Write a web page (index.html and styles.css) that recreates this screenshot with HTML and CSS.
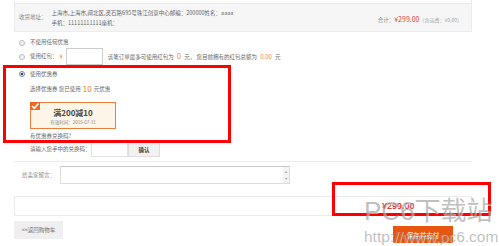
FILE: index.html
```html
<!DOCTYPE html>
<html lang="zh-CN">
<head>
    <meta charset="UTF-8">
    <meta name="viewport" content="width=device-width, initial-scale=1.0">
    <title>确认订单</title>
    <link rel="stylesheet" href="styles.css">
</head>
<body>
    <div class="page">
        <!-- 收货信息 -->
        <div class="order-box">
            <div class="order-top"></div>
            <div class="address-bar">
                <span class="address-label">收货地址：</span>
                <div class="address-text">
                    <p>上海市,上海市,闸北区,灵石路695号珠江创意中心邮编：200000姓名：aaaa</p>
                    <p>手机：11111111111座机：</p>
                </div>
                <div class="total">合计：<span class="price">¥299.00</span><span class="freight">（含运费：¥0.00）</span></div>
            </div>
        </div>

        <!-- 优惠选项 -->
        <div class="discounts">
            <div class="option option-none"><span class="radio"></span>不使用任何优惠</div>
            <div class="option option-bonus">
                <span class="radio"></span>使用红包：<span class="yen">¥</span><input class="bonus-input" type="text">
                <span class="hint">该笔订单最多可使用红包为 <em class="num">0</em> 元， 您目前拥有的红包总额为 <em class="num small">0.00</em> 元</span>
            </div>
            <div class="option option-coupon"><span class="radio checked"></span>使用优惠券</div>
            <div class="coupon-info">选择优惠券 您已使用 <em class="num big">10</em> 元优惠</div>
            <div class="coupon-card">
                <span class="coupon-check">
                    <svg width="10" height="8" viewBox="0 0 10 8"><polyline points="2,4 4.3,6.3 8.5,1.5" fill="none" stroke="#fff" stroke-width="1.6"/></svg>
                </span>
                <div class="coupon-title">满200减10</div>
                <div class="coupon-date">有效时间：2015-07-31</div>
            </div>
            <div class="redeem-ask">有优惠券兑换码?</div>
            <div class="redeem-row">
                <span class="redeem-label">请输入您手中的兑换码：</span><input class="redeem-input" type="text"><button class="btn-confirm">确认</button>
            </div>
        </div>

        <!-- 留言 -->
        <div class="message-row">
            <span class="message-label">给卖家留言：</span>
            <div class="message-box"><span class="scroll-arrows">▴<br>▾</span></div>
        </div>

        <div class="pay-bar"><span class="pay-price">¥299.00</span></div>

        <div class="actions">
            <button class="btn-back">&lt;&lt;返回购物车</button>
            <button class="btn-pay">保存并支付</button>
        </div>
    </div>

    <!-- 截图标注 -->
    <div class="mark mark-coupon"></div>
    <div class="mark mark-price"></div>

    <div class="watermark">
        <div class="wm-title">PC6下载站</div>
        <div class="wm-url">http://www.pc6.com</div>
    </div>
</body>
</html>
```

FILE: styles.css
```css
* {
    margin: 0;
    padding: 0;
    box-sizing: border-box;
}

body {
    width: 499px;
    height: 246px;
    overflow: hidden;
    position: relative;
    background: #fff;
    color: #666;
    font-family: "Noto Sans CJK SC", "Liberation Sans", sans-serif;
    font-size: 5.5px;
    line-height: 1.2;
}

em {
    font-style: normal;
}

.page {
    width: 472px;
}

/* Order Box */
.order-box {
    margin-left: 14px;
    width: 458px;
    border: 1px solid #ececec;
    border-top: none;
}

.order-top {
    height: 4px;
    border-bottom: 1px solid #ececec;
}

.address-bar {
    height: 27px;
    background: #f6f6f6;
    display: flex;
    align-items: center;
    padding: 0 9px 0 4px;
}

.address-label {
    color: #888;
    margin-right: 5px;
}

.address-text {
    flex: 1;
    line-height: 10px;
    white-space: nowrap;
}

.total {
    align-self: flex-end;
    margin-bottom: 7px;
    color: #888;
    white-space: nowrap;
}

.total .price {
    color: #e4393c;
    font-size: 7px;
}

.total .freight {
    color: #aaa;
    font-size: 5px;
}

/* Discount Options */
.discounts {
    padding-top: 5px;
}

.option {
    display: flex;
    align-items: center;
    padding-left: 19px;
}

.option-none {
    height: 11px;
}

.option-bonus {
    height: 17px;
}

.option-coupon {
    height: 12px;
    margin-top: 3px;
}

.radio {
    width: 6px;
    height: 6px;
    border: 1px solid #bbb;
    border-radius: 50%;
    background: #f4f4f4;
    margin-right: 5px;
}

.radio.checked {
    border-color: #7a8a9c;
    background: radial-gradient(circle, #2a3f5c 45%, #e6eaef 55%);
}

.yen {
    color: #f08030;
    font-size: 6px;
    margin-left: 2px;
}

.bonus-input {
    width: 37px;
    height: 17px;
    border: 1px solid #ccc;
    margin-left: 3px;
    outline: none;
}

.hint {
    margin-left: 5px;
}

.num {
    color: #f07b2b;
    font-size: 7px;
    margin: 0 2px;
}

.num.small {
    font-size: 6px;
}

.num.big {
    font-size: 8px;
}

.coupon-info {
    height: 12px;
    margin-top: 3px;
    padding-left: 30px;
    display: flex;
    align-items: center;
}

/* Coupon Card */
.coupon-card {
    position: relative;
    margin: 7px 0 0 30px;
    width: 86px;
    height: 27px;
    border: 1px solid #ec7d3b;
    background: #fdf5e8;
    text-align: center;
    padding-top: 5px;
}

.coupon-check {
    position: absolute;
    left: -1px;
    top: -1px;
    width: 10px;
    height: 8px;
    background: #ee6a22;
    display: flex;
}

.coupon-title {
    font-size: 8px;
    font-weight: bold;
    color: #444;
    line-height: 10px;
}

.coupon-date {
    font-size: 4.5px;
    color: #888;
    line-height: 8px;
}

.redeem-ask {
    height: 12px;
    margin-top: 1px;
    padding-left: 30px;
    display: flex;
    align-items: center;
}

.redeem-row {
    height: 15px;
    padding-left: 30px;
    display: flex;
    align-items: center;
}

.redeem-label {
    width: 61px;
}

.redeem-input {
    width: 37px;
    height: 15px;
    border: 1px solid #e2e2e2;
    outline: none;
}

.btn-confirm {
    width: 32px;
    height: 15px;
    border: 1px solid #ddd;
    background: #f2f2f2;
    font-family: inherit;
    font-size: 5.5px;
    font-weight: bold;
    color: #444;
}

/* Message */
.message-row {
    margin: 4px 0 0 14px;
    padding-top: 4px;
    border-top: 1px solid #ececec;
    display: flex;
    align-items: center;
    height: 23px;
}

.message-label {
    color: #888;
    width: 46px;
    padding-left: 8px;
}

.message-box {
    position: relative;
    width: 230px;
    height: 18px;
    border: 1px solid #ddd;
    border-top-color: #c8c8c8;
}

.scroll-arrows {
    position: absolute;
    right: 0;
    top: 0;
    width: 6px;
    height: 16px;
    background: #f3f3f3;
    font-size: 4px;
    line-height: 7px;
    text-align: center;
    color: #999;
    padding-top: 1px;
}

/* Pay Bar */
.pay-bar {
    margin: 12px 0 0 14px;
    width: 458px;
    height: 20px;
    border: 1px solid #ececec;
    display: flex;
    align-items: center;
    padding-left: 367px;
}

.pay-price {
    color: #e4393c;
    font-size: 9px;
    font-weight: bold;
    font-family: "Liberation Sans", sans-serif;
}

.actions {
    display: flex;
    justify-content: space-between;
    align-items: flex-start;
    padding-left: 14px;
    padding-right: 19px;
    margin-top: 5px;
}

.btn-back {
    width: 49px;
    height: 18px;
    border: none;
    background: #efefef;
    color: #777;
    font-family: inherit;
    font-size: 5.5px;
}

.btn-pay {
    margin-top: 5px;
    width: 60px;
    height: 17px;
    border: none;
    background: #e8550e;
    color: #fff;
    font-family: inherit;
    font-size: 6.5px;
}

/* Annotation marks */
.mark {
    position: absolute;
    border: 3px solid #f00;
}

.mark-coupon {
    left: 3px;
    top: 65px;
    width: 228px;
    height: 78px;
}

.mark-price {
    left: 332px;
    top: 182px;
    width: 159px;
    height: 34px;
}

/* Watermark */
.watermark {
    position: absolute;
    left: 364px;
    top: 196px;
    color: rgba(130, 130, 130, 0.5);
    text-shadow: 1px 1px 0 rgba(255, 255, 255, 0.5);
    font-family: "Liberation Sans", "Noto Sans CJK SC", sans-serif;
    white-space: nowrap;
    pointer-events: none;
}

.wm-title {
    font-size: 26px;
    line-height: 30px;
}

.wm-url {
    font-size: 15.5px;
    line-height: 20px;
    margin-top: 1px;
}
```
